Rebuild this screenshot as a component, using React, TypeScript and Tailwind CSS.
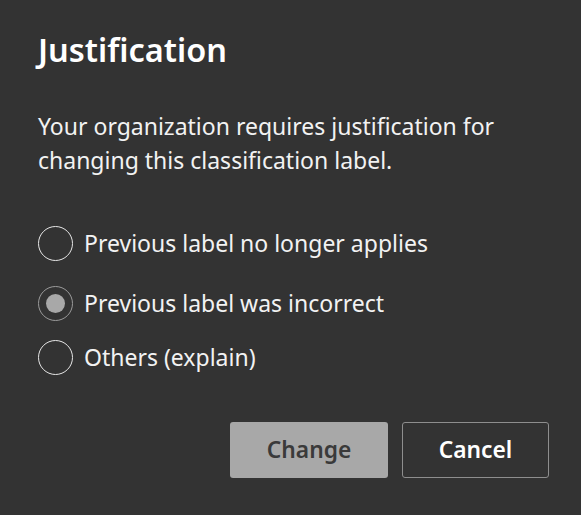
import React, { useState } from 'react';

const options = [
  'Previous label no longer applies',
  'Previous label was incorrect',
  'Others (explain)',
];

const Radio: React.FC<{ checked: boolean }> = ({ checked }) => (
  <span
    className={
      'flex h-[35px] w-[35px] shrink-0 items-center justify-center rounded-full border-[1.5px] ' +
      (checked ? 'border-[#9a9a9a]' : 'border-[#e6e6e6]')
    }
  >
    {checked && <span className="h-[19px] w-[19px] rounded-full bg-[#a8a8a8]" />}
  </span>
);

export default function App() {
  const [selected, setSelected] = useState(1);

  return (
    <div
      className="h-[515px] w-[581px] bg-[#333333] pl-[38px] pr-[32px] pt-[28px] text-white"
      style={{ fontFamily: '"Noto Sans", "Open Sans", sans-serif' }}
    >
      <h1 className="text-[32.5px] font-semibold leading-[44px]">Justification</h1>

      <p className="mt-[37px] text-[23px] leading-[34px] text-[#f2f2f2]">
        Your organization requires justification for changing this classification label.
      </p>

      <div className="mt-[49px] flex flex-col">
        {options.map((label, i) => (
          <label
            key={label}
            onClick={() => setSelected(i)}
            className={
              'flex cursor-pointer items-center gap-[11px] text-[23px] text-[#f2f2f2] ' +
              (i === 0 ? 'h-[35px] mb-[25px]' : i === 1 ? 'h-[35px] mb-[19px]' : 'h-[35px]')
            }
          >
            <Radio checked={selected === i} />
            <span>{label}</span>
          </label>
        ))}
      </div>

      <div className="mt-[47px] flex justify-end gap-[14px]">
        <button className="h-[56px] w-[158px] rounded-[3px] bg-[#a8a8a8] text-[22.8px] font-semibold text-[#3a3a3a]">
          Change
        </button>
        <button className="h-[56px] w-[147px] rounded-[3px] border-[1.5px] border-[#8e8e8e] text-[22.8px] font-semibold text-white">
          Cancel
        </button>
      </div>
    </div>
  );
}
